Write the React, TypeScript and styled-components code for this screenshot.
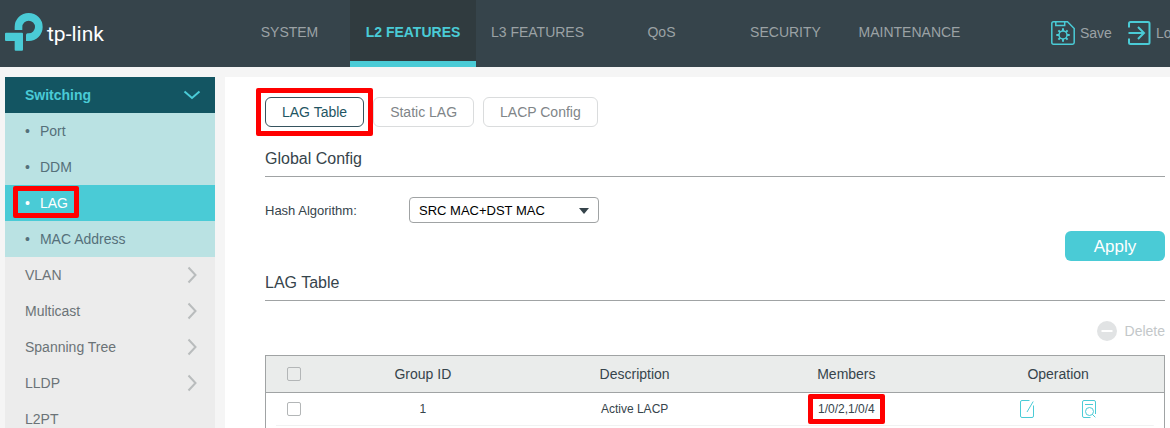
import React from 'react';
import styled, { createGlobalStyle, css } from 'styled-components';

const accent = '#4acbd6';

const GlobalStyle = createGlobalStyle`
  *, *::before, *::after { box-sizing: border-box; }
  body {
    margin: 0;
    background: #f5f5f5;
    color: #36444b;
    font-family: "Liberation Sans", Arial, sans-serif;
    font-size: 14px;
  }
  button, select, input { font-family: inherit; }
`;

const Page = styled.div`
  height: 100vh;
  display: flex;
  flex-direction: column;
  overflow: hidden;
`;

const Header = styled.header`
  flex: none;
  height: 67px;
  display: flex;
  align-items: stretch;
  background: #36444b;
  white-space: nowrap;
  overflow: hidden;
`;

const Brand = styled.a`
  flex: none;
  width: 227px;
  padding: 12px 0 0 4px;
  display: flex;
  gap: 4px;
  color: #fff;
  text-decoration: none;
`;

const BrandName = styled.span`
  font-family: Roboto, "Liberation Sans", sans-serif;
  font-size: 21px;
  line-height: 44px;
`;

const Nav = styled.nav`
  flex: none;
  display: grid;
  grid-template-columns: repeat(6, 124px);
`;

const NavLink = styled.a<{ $active?: boolean }>`
  display: flex;
  align-items: center;
  justify-content: center;
  padding: 0 0 3px 1px;
  color: #9ba2a5;
  text-decoration: none;
  ${({ $active }) =>
    $active &&
    css`
      margin: 0 -1px;
      padding: 3px 0 0;
      border-bottom: 6px solid ${accent};
      background: #303b3f;
      color: ${accent};
      font-weight: bold;
    `}
`;

const Tools = styled.div`
  flex: none;
  display: flex;
  align-items: center;
  gap: 16px;
  padding: 0 0 2px 80px;
`;

const ToolButton = styled.button`
  display: flex;
  align-items: center;
  gap: 5px;
  padding: 0;
  border: 0;
  background: none;
  color: #9ba2a5;
  font-size: 14px;
`;

const Body = styled.div`
  flex: 1;
  min-height: 0;
  display: flex;
  gap: 10px;
  padding: 10px 0 0 5px;
`;

const Sidebar = styled.nav`
  flex: none;
  width: 210px;
  background: #ececec;
  overflow: hidden;
`;

const MenuLink = styled.a<{ $open?: boolean }>`
  display: flex;
  align-items: center;
  justify-content: space-between;
  height: 36px;
  padding: 0 ${({ $open }) => ($open ? 14 : 18)}px 0 20px;
  color: ${({ $open }) => ($open ? accent : '#6b7377')};
  background: ${({ $open }) => ($open ? '#135562' : 'transparent')};
  font-weight: ${({ $open }) => ($open ? 'bold' : 'normal')};
  text-decoration: none;
`;

const SubLink = styled.a<{ $selected?: boolean }>`
  position: relative;
  display: flex;
  align-items: center;
  gap: 10px;
  height: 36px;
  padding-left: 20px;
  background: ${({ $selected }) => ($selected ? accent : '#bae2e3')};
  color: ${({ $selected }) => ($selected ? '#fff' : '#55707a')};
  text-decoration: none;
`;

const Mark = styled.span<{ $x: number; $y: number }>`
  position: absolute;
  inset: ${({ $x, $y }) => `${-$y}px ${-$x}px`};
  border: 5px solid #f00;
  border-radius: 2px;
  pointer-events: none;
`;

const SideMark = styled.span`
  position: absolute;
  left: 8px;
  top: 1px;
  width: 66px;
  height: 32px;
  border: 5px solid #f00;
  border-radius: 2px;
  pointer-events: none;
`;

const Marked = styled.span`
  position: relative;
  display: inline-block;
`;

const Main = styled.main`
  flex: 1;
  min-width: 0;
  display: flex;
  flex-direction: column;
  padding: 20px 5px 0 40px;
  background: #fff;
`;

const Section = styled.section`
  padding-top: 12px;
`;

const Tabs = styled.div`
  display: flex;
  gap: 9px;
`;

const Tab = styled.button<{ $active?: boolean }>`
  height: 30px;
  padding: 0 16px;
  border: 1px solid ${({ $active }) => ($active ? '#36535e' : '#dadcdd')};
  border-radius: 6px;
  background: #fff;
  color: ${({ $active }) => ($active ? '#1f5563' : '#808588')};
  font-size: 14px;
`;

const SectionTitle = styled.h2`
  margin: 0;
  padding-top: 3px;
  border-bottom: 1px solid #a0a3a4;
  font-size: 16px;
  font-weight: normal;
  line-height: 34px;
`;

const ConfigForm = styled.form`
  display: flex;
  flex-direction: column;
  padding: 20px 0 2px;
`;

const Field = styled.div`
  display: flex;
  align-items: center;
  font-size: 13px;
`;

const Label = styled.label`
  width: 144px;
`;

const SelectBox = styled.div`
  position: relative;
  width: 190px;
  height: 26px;

  svg {
    position: absolute;
    right: 10px;
    top: 11px;
    pointer-events: none;
  }
`;

const Select = styled.select`
  appearance: none;
  width: 100%;
  height: 100%;
  padding: 0 9px;
  border: 1px solid #a0a3a4;
  border-radius: 4px;
  background: #fff;
  color: #000;
  font-size: 13px;
`;

const Apply = styled.button`
  align-self: flex-end;
  width: 100px;
  height: 30px;
  margin-top: 8px;
  padding: 1px 0 0;
  border: 0;
  border-radius: 6px;
  background: ${accent};
  color: #fff;
  font-size: 17px;
`;

const DeleteButton = styled.button`
  align-self: flex-end;
  display: flex;
  align-items: center;
  gap: 8px;
  margin: 20px 0 14px;
  padding: 0;
  border: 0;
  background: none;
  color: #c3c7c9;
  font-size: 14px;
`;

const TableFrame = styled.div`
  flex: 1;
  min-height: 0;
  border: 1px solid #a0a3a4;
  border-bottom: 0;
  overflow: hidden;
`;

const Table = styled.table`
  width: 100%;
  table-layout: fixed;
  border-collapse: separate;
  border-spacing: 0;
  text-align: center;

  th, td { padding: 0; }
  th {
    height: 37px;
    background: #eaeceb;
    border-bottom: 1px solid #a0a3a4;
    font-weight: normal;
  }
  td {
    height: 33px;
    padding-bottom: 2px;
    font-size: 12px;
  }
  tbody tr {
    background: linear-gradient(#f1f2f2, #f1f2f2) center bottom / calc(100% - 20px) 1px no-repeat;
  }
`;

const CheckColumn = styled.col`
  width: 51px;
`;

const Check = styled.input`
  appearance: none;
  display: block;
  width: 14px;
  height: 14px;
  margin: 0 0 0 21px;
  border: 1px solid #b3b6b7;
  border-radius: 2px;
`;

const Operations = styled.div`
  display: flex;
  justify-content: center;
  gap: 48px;
`;

const IconButton = styled.button`
  display: block;
  padding: 0;
  border: 0;
  background: none;
  line-height: 0;
`;

const LogoMark = () => (
  <svg width="39" height="39" viewBox="12 36 117 117" fill={accent} aria-hidden="true">
    <path d="M44 90V81a42 42 0 1 1 42 42H78V105q0-5 5-5H86a19 19 0 1 0-19-19V90Z" />
    <path d="M15 101q0-3 3-3H66q3 0 3 3V149q0 3-3 3H47q-3 0-3-3V123H18q-3 0-3-3Z" />
  </svg>
);

const SaveIcon = () => (
  <svg width="24" height="24" viewBox="0 0 24 24" fill="none" stroke={accent} strokeWidth="1.500" aria-hidden="true">
    <path d="M2.500 .8H16.500L23.200 7.500V21.500q0 1.700-1.700 1.700H2.500q-1.700 0-1.700-1.700V2.500Q.8.8 2.500.8Z" />
    <path d="M4.800 1V4.500H13.700V1" />
    <circle cx="12" cy="14" r="4" />
    <path strokeWidth="2" d="M12 10V7.300M12 18v2.700M8 14H5.300M16 14h2.700M9.200 11.200 7.400 9.400M14.800 11.200l1.800-1.800M9.200 16.800l-1.800 1.800M14.800 16.800l1.800 1.800" />
  </svg>
);

const LogoutIcon = () => (
  <svg width="23" height="24" viewBox="0 0 23 24" fill="none" stroke={accent} strokeWidth="2" aria-hidden="true">
    <path d="M1 6.500V2.500Q1 1 2.500 1H20q1.500 0 1.500 1.500V21.500Q21.500 23 20 23H2.500Q1 23 1 21.500V17.500" />
    <path d="M.5 12H15.500M10 6l6 6-6 6" />
  </svg>
);

const ChevronRight = () => (
  <svg width="10" height="18" viewBox="0 0 10 18" fill="none" stroke="#b9bcbd" strokeWidth="2" aria-hidden="true">
    <path d="M1.500 1.500 8.500 9l-7 7.500" />
  </svg>
);

const ChevronDown = () => (
  <svg width="18" height="10" viewBox="0 0 18 10" fill="none" stroke={accent} strokeWidth="2" aria-hidden="true">
    <path d="M1.500 1.500 9 8l7.500-6.500" />
  </svg>
);

const EditIcon = () => (
  <svg width="14" height="18" viewBox="0 0 14 18" fill="none" stroke={accent} aria-hidden="true">
    <path d="M9.500 .5H2Q.5.5.5 2V16q0 1.500 1.500 1.500H12q1.500 0 1.500-1.500V5.500M13.200 1.500 7 12" />
  </svg>
);

const ViewIcon = () => (
  <svg width="15" height="18" viewBox="0 0 15 18" fill="none" stroke={accent} aria-hidden="true">
    <path d="M8.500 17.500H2Q.5 17.500.5 16V2Q.5.500 2 .5H12q1.500 0 1.500 1.500V14M3 4.500h8" />
    <circle cx="7.500" cy="11.500" r="4" />
    <path d="M10.300 14.300l3 3" />
  </svg>
);

const DeleteIcon = () => (
  <svg width="20" height="20" viewBox="0 0 20 20" aria-hidden="true">
    <circle cx="10" cy="10" r="10" fill="#e1e3e4" />
    <path d="M4.500 10h11" stroke="#fff" strokeWidth="2" />
  </svg>
);

const navItems = ['SYSTEM', 'L2 FEATURES', 'L3 FEATURES', 'QoS', 'SECURITY', 'MAINTENANCE'];
const subItems = ['Port', 'DDM', 'LAG', 'MAC Address'];
const menuItems = [
  { name: 'VLAN', nested: true },
  { name: 'Multicast', nested: true },
  { name: 'Spanning Tree', nested: true },
  { name: 'LLDP', nested: true },
  { name: 'L2PT', nested: false },
];
const groups = [{ id: 1, description: 'Active LACP', members: '1/0/2,1/0/4' }];

export default function App() {
  return (
    <Page>
      <GlobalStyle />
      <Header>
        <Brand href="#">
          <LogoMark />
          <BrandName>tp-link</BrandName>
        </Brand>
        <Nav>
          {navItems.map((name) => (
            <NavLink key={name} href="#" $active={name === 'L2 FEATURES'}>
              {name}
            </NavLink>
          ))}
        </Nav>
        <Tools>
          <ToolButton type="button"><SaveIcon />Save</ToolButton>
          <ToolButton type="button"><LogoutIcon />Log Out</ToolButton>
        </Tools>
      </Header>
      <Body>
        <Sidebar>
          <MenuLink href="#" $open>Switching<ChevronDown /></MenuLink>
          {subItems.map((name) => (
            <SubLink key={name} href="#" $selected={name === 'LAG'}>
              <span>•</span>
              <span>{name}</span>
              {name === 'LAG' && <SideMark />}
            </SubLink>
          ))}
          {menuItems.map(({ name, nested }) => (
            <MenuLink key={name} href="#">
              {name}
              {nested && <ChevronRight />}
            </MenuLink>
          ))}
        </Sidebar>
        <Main>
          <Tabs>
            <Marked>
              <Tab type="button" $active>LAG Table</Tab>
              <Mark $x={9} $y={9} />
            </Marked>
            <Tab type="button">Static LAG</Tab>
            <Tab type="button">LACP Config</Tab>
          </Tabs>
          <Section>
            <SectionTitle>Global Config</SectionTitle>
            <ConfigForm onSubmit={(e: React.FormEvent) => e.preventDefault()}>
              <Field>
                <Label htmlFor="hash">Hash Algorithm:</Label>
                <SelectBox>
                  <Select id="hash" defaultValue="both">
                    <option value="both">SRC MAC+DST MAC</option>
                  </Select>
                  <svg width="10" height="6" viewBox="0 0 10 6" fill="#36444b" aria-hidden="true">
                    <path d="M0 0h10L5 6Z" />
                  </svg>
                </SelectBox>
              </Field>
              <Apply type="submit">Apply</Apply>
            </ConfigForm>
          </Section>
          <SectionTitle>LAG Table</SectionTitle>
          <DeleteButton type="button"><DeleteIcon />Delete</DeleteButton>
          <TableFrame>
            <Table>
              <colgroup>
                <CheckColumn />
                <col span={4} />
              </colgroup>
              <thead>
                <tr>
                  <th><Check type="checkbox" aria-label="Select all groups" /></th>
                  <th>Group ID</th>
                  <th>Description</th>
                  <th>Members</th>
                  <th>Operation</th>
                </tr>
              </thead>
              <tbody>
                {groups.map((group) => (
                  <tr key={group.id}>
                    <td><Check type="checkbox" aria-label={`Select group ${group.id}`} /></td>
                    <td>{group.id}</td>
                    <td>{group.description}</td>
                    <td>
                      <Marked>
                        {group.members}
                        <Mark $x={10} $y={8} />
                      </Marked>
                    </td>
                    <td>
                      <Operations>
                        <IconButton type="button" aria-label="Edit"><EditIcon /></IconButton>
                        <IconButton type="button" aria-label="View details"><ViewIcon /></IconButton>
                      </Operations>
                    </td>
                  </tr>
                ))}
              </tbody>
            </Table>
          </TableFrame>
        </Main>
      </Body>
    </Page>
  );
}
